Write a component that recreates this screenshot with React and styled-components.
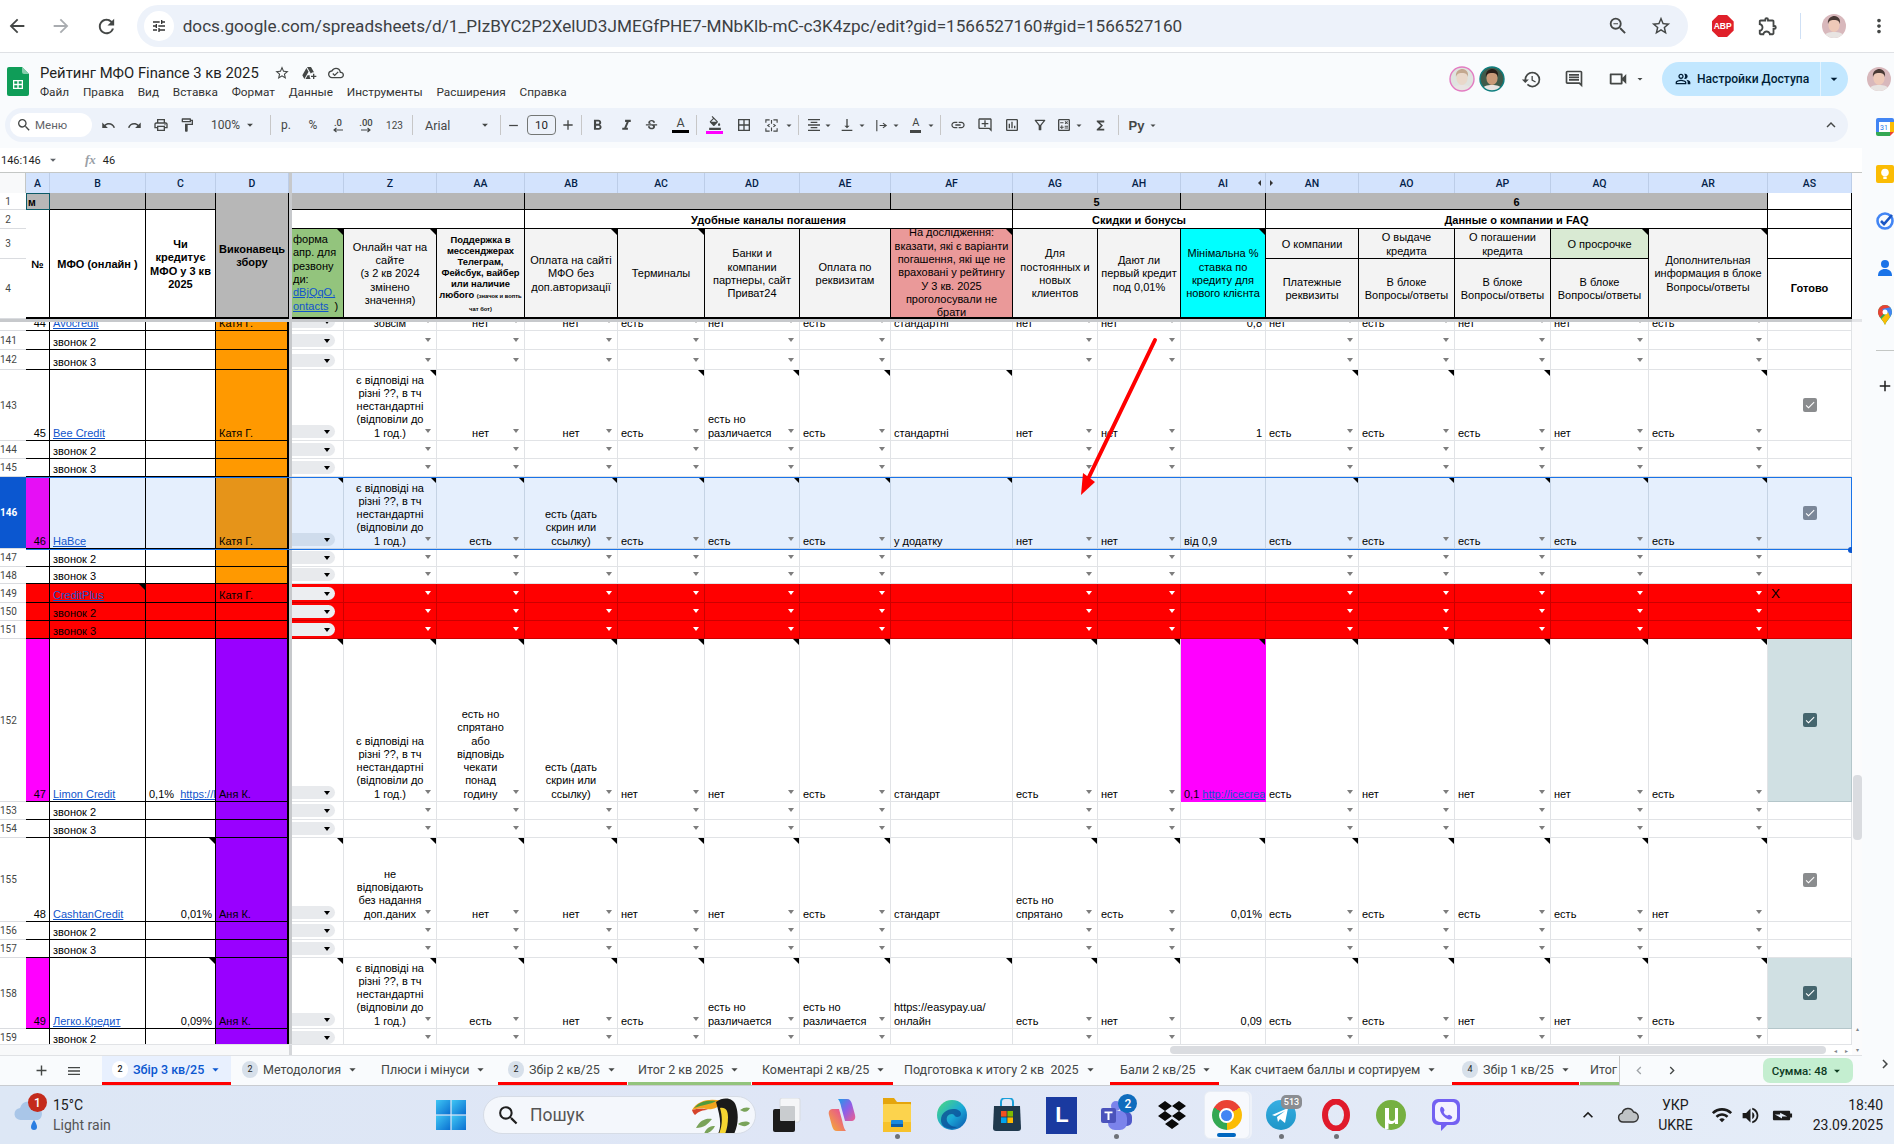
import React from 'react';
import styled, { createGlobalStyle, css } from 'styled-components';
import {
  MdArrowBack, MdArrowForward, MdRefresh, MdStarBorder, MdZoomOut, MdMoreVert, MdUndo, MdRedo, MdOutlinePrint,
  MdOutlineFormatPaint, MdFormatBold, MdFormatItalic, MdStrikethroughS, MdFormatColorFill, MdBorderAll, MdVerticalAlignBottom,
  MdInsertLink, MdOutlineAddComment, MdOutlineInsertChart, MdOutlineFilterAlt, MdOutlineCalculate, MdFunctions, MdHistory,
  MdOutlineComment, MdOutlineVideocam, MdOutlinePeopleAlt, MdExpandLess, MdAdd, MdRemove, MdMenu, MdSearch, MdChevronLeft,
  MdChevronRight, MdArrowDropDown, MdCheck, MdTune, MdOutlineExtension, MdOutlineAddToDrive, MdOutlineCloudDone, MdFormatAlignCenter,
  MdKeyboardArrowUp, MdWifi, MdVolumeUp, MdBatteryChargingFull
} from 'react-icons/md';

const SHEET = "'Liberation Sans', Arial, sans-serif";
const UI = "Roboto, 'Noto Sans', sans-serif";
const ORANGE = '#ff9900', VIOLET = '#9900ff', MAGENTA = '#ff00ff', RED = '#ff0000', TEAL = '#d0e0e3';
const widths = [26, 24, 96, 70, 73, 3, 52, 93, 88, 93, 87, 95, 91, 122, 85, 83, 85, 93, 96, 96, 98, 119, 84];
const GT = widths.map(w => `${w}px`).join(' ');

const Global = createGlobalStyle`
  html, body { margin: 0; padding: 0; overflow: hidden; background: #fff; }
  * { box-sizing: border-box; }
`;

const Page = styled.div`
  position: relative; width: 1894px; height: 1144px; overflow: hidden;
  display: flex; flex-direction: column; font-family: ${UI}; color: #1f1f1f; background: #f9fbfd;
`;
const Slot = styled.div`
  flex: none; width: ${p => p.$w}px; margin-left: ${p => p.$ml || 0}px; height: 100%;
  display: flex; align-items: center; justify-content: center; color: ${p => p.$color || '#444746'};
  font-size: ${p => p.$fs || 12}px; gap: ${p => p.$gap || 0}px; white-space: nowrap;
`;
function Seq({ start, items }) {
  let x = start;
  return items.map((it, i) => {
    const ml = it.c - it.w / 2 - x;
    x = it.c + it.w / 2;
    return <Slot key={i} $w={it.w} $ml={ml} $color={it.color} $fs={it.fs} $gap={it.gap}>{it.n}</Slot>;
  });
}

/* ---------- browser chrome ---------- */
const Chrome = styled.header`
  flex: none; height: 53px; display: flex; align-items: center; background: #fff; border-bottom: 1.5px solid #dfe1e5;
`;
const UrlBar = styled.div`
  flex: none; width: 1551px; height: 42px; margin-left: 18px; border-radius: 21px; background: #edf2fa;
  display: flex; align-items: center; position: relative;
`;
const SiteChip = styled.div`
  flex: none; width: 30px; height: 30px; margin-left: 7px; border-radius: 50%; background: #fff;
  display: flex; align-items: center; justify-content: center; color: #333;
`;
const UrlText = styled.div`
  margin-left: 9px; font: 400 17.15px ${UI}; color: #3c4043; white-space: nowrap;
`;
const UrlTools = styled.div`
  margin-left: auto; margin-right: 16px; display: flex; gap: 21px; color: #444746; align-items: center;
`;
const AbpBadge = styled.div`
  width: 22px; height: 22px; background: #e0202a; color: #fff; font: 700 8.5px ${SHEET}; display: flex; align-items: center; justify-content: center;
  clip-path: polygon(30% 0, 70% 0, 100% 30%, 100% 70%, 70% 100%, 30% 100%, 0 70%, 0 30%);
`;
const ThinSep = styled.div`width: 1px; height: 26px; background: #cfe0f5;`;

function Face({ size = 26, ring, bg = '#d9c2c4', hair = '#4a3a36', skin = '#eec9b8', id }) {
  return (
    <svg width={size} height={size} viewBox="0 0 26 26">
      <defs><clipPath id={id}><circle cx="13" cy="13" r="12" /></clipPath></defs>
      <g clipPath={`url(#${id})`}>
        <rect width="26" height="26" fill={bg} />
        <path d="M2 26c1-6 6-7 11-7s10 1 11 7z" fill="#e8e4e2" />
        <ellipse cx="13" cy="12" rx="5.6" ry="7" fill={skin} />
        <path d="M7 11c-1-6 4-8 6-8s7 1 6 8c-1-3-2-4-6-4s-5 1-6 4z" fill={hair} />
      </g>
      {ring && <circle cx="13" cy="13" r="12" fill="none" stroke={ring} strokeWidth="1.4" />}
    </svg>
  );
}

/* ---------- docs header ---------- */
const DocsHead = styled.div`flex: none; height: 53px; display: flex; align-items: flex-start;`;
const LogoBox = styled.svg`flex: none; margin: 14px 0 0 7px;`;
const SheetsLogo = () => (
  <LogoBox width="22" height="29" viewBox="0 0 22 29">
    <path d="M2 0h13l7 7v20a2 2 0 0 1-2 2H2a2 2 0 0 1-2-2V2a2 2 0 0 1 2-2z" fill="#0f9d58" />
    <path d="M15 0l7 7h-5a2 2 0 0 1-2-2z" fill="#87ceac" />
    <path d="M6 13h10v9H6zm1.3 1.3v2.5h3v-2.5zm4.4 0v2.5h3v-2.5zm-4.4 3.9v2.5h3v-2.5zm4.4 0v2.5h3v-2.5z" fill="#fff" fillRule="evenodd" />
  </LogoBox>
);
const TitleCol = styled.div`margin-left: 11px; display: flex; flex-direction: column; padding-top: 11px;`;
const TitleRow = styled.div`display: flex; align-items: center; height: 18px; color: #3c4043;`;
const DocTitle = styled.div`font: 400 14.8px ${UI}; color: #1f1f1f; white-space: nowrap; width: 219px;`;
const MenuRow = styled.nav`display: flex; gap: 13.8px; margin-top: 3px;`;
const MenuItem = styled.span`font: 400 11.8px ${UI}; color: #333; white-space: nowrap;`;
const HeadRight = styled.div`margin-left: auto; width: 445px; height: 53px; padding-top: 9px; display: flex; align-items: flex-start;`;
const RightSlots = styled.div`height: 34px; display: flex; width: 100%;`;
const ShareBtn = styled.div`
  flex: none; width: 186px; height: 34px; background: #c2e7ff; border-radius: 17px; display: flex; align-items: center; color: #001d35;
`;
const ShareMain = styled.div`
  width: 159px; height: 100%; display: flex; align-items: center; padding-left: 13px; gap: 6px;
  font: 500 12.1px ${UI}; border-right: 1px solid #e3f3ff; white-space: nowrap;
`;
const ShareDrop = styled.div`flex: 1; display: flex; justify-content: center;`;

/* ---------- toolbar ---------- */
const BodyRow = styled.div`flex: 1; min-height: 0; display: flex;`;
const MainCol = styled.main`flex: none; width: 1862px; display: flex; flex-direction: column; min-height: 0;`;
const ToolbarWrap = styled.div`flex: none; height: 42px; padding: 2px 14px 6px 5px;`;
const Toolbar = styled.div`
  height: 34px; border-radius: 17px; background: #edf2fa; display: flex; align-items: center; padding-left: 5px; position: relative;
`;
const MenuSearch = styled.div`
  flex: none; width: 82px; height: 24px; border-radius: 12px; background: #fff; display: flex; align-items: center; padding-left: 6px; gap: 3px;
  font: 400 11.5px ${UI}; color: #5f6368;
`;
const Sep = styled.div`width: 1px; height: 20px; background: #c7c7c7;`;
const ToolText = styled.span`font: ${p => p.$w || 400} ${p => p.$s || 12}px ${p => p.$f || UI}; color: #444746;`;
const FontName = styled(ToolText)`width: 100%; font-size: 12.5px;`;
const FontBox = styled.div`
  width: 29px; height: 20px; border: 1px solid #747775; border-radius: 4px; display: flex; align-items: center; justify-content: center;
  font: 400 11.5px ${UI}; color: #1f1f1f;
`;
const DecBox = styled.div`display: flex; flex-direction: column; align-items: center; font: 500 9.5px ${UI}; line-height: 9px; color: #444746;`;
const ColorIcon = styled.div`display: flex; flex-direction: column; align-items: center; gap: 1px; font: 400 ${p => p.$s || 12.5}px ${UI}; color: #444746; line-height: 12px;`;
const ColorBar = styled.div`width: ${p => p.$bw || 17}px; height: 3px; background: ${p => p.$c}; border-top: 1px solid ${p => p.$c}; border-bottom: 1px solid ${p => p.$c}; background-clip: padding-box;`;
const Drop = ({ c = '#444746', s = 14 }) => <MdArrowDropDown size={s} color={c} />;
const DecArrow = ({ right }) => (
  <svg width="12" height="6" viewBox="0 0 12 6">
    <path d={right ? 'M1 3h9M7.5 1l2.5 2-2.5 2' : 'M11 3H2M4.5 1L2 3l2.5 2'} fill="none" stroke="#444746" strokeWidth="1.1" />
  </svg>
);
const MergeIcon = () => (
  <svg width="15" height="15" viewBox="0 0 16 16" fill="none" stroke="#444746" strokeWidth="1.2">
    <path d="M2 5V2h4M10 2h4v3M2 11v3h4M10 14h4v-3M8 2v4M8 10v4M6 6.5L4 8l2 1.5M10 6.5L12 8l-2 1.5" />
  </svg>
);
const RepIcon = () => (
  <svg width="15" height="15" viewBox="0 0 16 16" fill="none" stroke="#444746" strokeWidth="1.2">
    <path d="M3 2v12M6 8h6M9.5 5.5L13 8l-3.5 2.5" />
  </svg>
);

/* ---------- formula bar ---------- */
const FormulaBar = styled.div`
  flex: none; height: 24px; background: #fff; display: flex; align-items: center; font: 400 11px ${UI}; color: #1f1f1f;
`;
const NameBox = styled.div`width: 60px; padding-left: 1px; display: flex; align-items: center; justify-content: space-between; white-space: nowrap;`;
const Fx = styled.span`margin-left: 25px; font: italic 700 13px 'Liberation Serif', serif; color: #9aa0a6;`;
const FxVal = styled.span`margin-left: 7px;`;

/* ---------- sheet ---------- */
const SheetArea = styled.section`flex: 1; min-height: 0; display: flex; border-top: 1px solid #c4c7c5;`;
const GridCol = styled.div`flex: none; width: 1852px; display: flex; flex-direction: column; min-height: 0; background: #fff;`;
const HeadGrid = styled.div`
  flex: none; display: grid; grid-template-columns: ${GT}; grid-template-rows: 20px 17px 19px 30px 60px;
  font: 400 11px ${SHEET}; color: #000;
`;
const place = css`
  grid-column: ${p => p.$c[0]} / ${p => p.$c[1]}; grid-row: ${p => p.$r[0]} / ${p => p.$r[1]};
`;
const Corner = styled.div`${place} background: #f8f9fa; border-right: 1px solid #c4c7c5;`;
const Letter = styled.div`
  ${place} background: #d3e3fd; border-right: 1px solid #bccde8; display: flex; align-items: center; justify-content: center; position: relative;
  font: 500 10.5px ${UI}; color: #041e49;
`;
const HideMark = styled.span`
  position: absolute; top: 7px; ${p => p.$side}: 4px; width: 0; height: 0; border-top: 3px solid transparent; border-bottom: 3px solid transparent;
  ${p => (p.$side === 'right' ? 'border-right: 3.5px solid #333;' : 'border-left: 3.5px solid #333;')}
`;
const RowNumCell = styled.div`
  ${place} background: #fff; border-bottom: 1px solid #dadce0; display: flex; align-items: center; font: 400 10px ${UI}; color: #444746;
`;
const RowNum = styled.span`width: 16px; text-align: center; white-space: nowrap;`;
const Freeze = styled.div`${place} background: #c7c9cc;`;
const noteCss = css`
  ${p => p.$note && css`&::after {
    content: ''; position: absolute; top: 0; right: 0; width: 0; height: 0;
    border-left: 6px solid transparent; border-top: 6px solid #000;
  }`}
`;
const HCell = styled.div`
  ${place} position: relative; background: ${p => p.$bg || '#fff'}; border-right: 1px solid #000; border-bottom: 1px solid #000;
  display: flex; align-items: center; justify-content: ${p => p.$left ? 'flex-start' : 'center'}; text-align: ${p => p.$left ? 'left' : 'center'};
  padding: ${p => p.$pt ?? 2}px ${p => p.$left ? 1 : 2}px 0; white-space: pre-line; overflow: hidden; line-height: 13.3px;
  font-weight: ${p => p.$bold ? 700 : 400}; font-size: ${p => p.$fs || 11}px;
  ${p => p.$thick && 'border-bottom-width: 2px;'}
  ${noteCss}
`;
const A1Cell = styled(HCell)`border: 1px solid #0b5a66; justify-content: flex-start; align-items: flex-end; font-size: 10.5px; font-weight: 700; padding: 0 1px;`;
const TightText = styled.div`font: 700 9.4px/11px ${SHEET}; white-space: pre;`;
const TinyText = styled.span`font-size: 5.8px;`;
const HLink = styled.span`color: #1155cc; text-decoration: underline;`;
const Band = styled.div`flex: none; height: 3px; background: #c7c9cc;`;
const Viewport = styled.div`flex: 1; min-height: 0; overflow: hidden;`;
const RowGrid = styled.div`
  display: grid; grid-template-columns: ${GT}; height: ${p => p.$h}px; position: relative;
  font: 400 11px/13.3px ${SHEET}; color: #000;
`;
const SelBox = styled.div`
  position: absolute; left: 26px; right: 0; top: 0; bottom: -1px; border: 1px solid #1a73e8; border-left: 0;
  border-top-width: 1.5px; border-bottom-width: 1.5px; pointer-events: none; z-index: 2;
`;
const SelHandle = styled.div`position: absolute; right: -3px; bottom: -4px; width: 6px; height: 6px; border-radius: 50%; background: #0b57d0;`;
const RowHead = styled.div`
  background: ${p => p.$sel ? '#0b57d0' : '#fff'}; color: ${p => p.$sel ? '#fff' : '#444746'}; font: ${p => p.$sel ? 700 : 400} 10px ${UI};
  border-bottom: 1px solid #dadce0; display: flex; align-items: center; overflow: hidden;
`;
const Cell = styled.div`
  position: relative; min-width: 0; background: ${p => p.$bg || 'transparent'};
  border-right: ${p => p.$rw || 1}px solid ${p => p.$line}; border-bottom: 1px solid ${p => p.$line};
  display: flex; align-items: flex-end; justify-content: ${p => p.$align === 'right' ? 'flex-end' : p.$align === 'center' ? 'center' : 'flex-start'};
  text-align: ${p => p.$align || 'left'}; padding: 0 3px; white-space: pre-line; overflow: hidden;
  ${noteCss}
`;
const CellText = styled.div`${p => p.$nowrap && 'white-space: pre;'}`;
const XMark = styled.div`font-size: 13.5px; line-height: 17px;`;
const CLink = styled.a`color: #1155cc; text-decoration: underline;`;
const ChipArrow = styled.span`
  position: absolute; right: 5.5px; bottom: 7.5px; width: 0; height: 0; border-left: 3.5px solid transparent; border-right: 3.5px solid transparent;
  border-top: 4px solid ${p => p.$c};
`;
const YCell = styled(Cell)`padding: 0 8px 2px 0; align-items: flex-end; justify-content: stretch;`;
const Pill = styled.div`
  flex: 1; height: 13px; border-radius: 0 7px 7px 0; background: ${p => p.$bg}; position: relative; flex-shrink: 0;
  &::after { content: ''; position: absolute; right: 5px; top: 4.5px; border-left: 3.5px solid transparent; border-right: 3.5px solid transparent; border-top: 4.5px solid #000; }
`;
const CheckWrap = styled.div`flex: 1; align-self: center; display: flex; justify-content: center;`;
const CheckBox = styled.div`
  width: 14px; height: 14px; border-radius: 2px; background: ${p => p.$bg}; color: #fff; display: flex; align-items: center; justify-content: center;
`;
const HScroll = styled.div`flex: none; height: 11px; display: flex; background: #fff; border-top: 1px solid #e1e3e6;`;
const HLeft = styled.div`width: 289px; background: #f8f9fa; flex: none;`;
const HFreeze = styled.div`width: 3px; background: #d5d7da; flex: none;`;
const HThumb = styled.div`flex: none; width: 656px; height: 8px; margin: 1px 0 0 878px; border-radius: 4px; background: #dadce0;`;
const HBtns = styled.div`margin-left: auto; width: 22px; display: flex; justify-content: space-around; align-items: center; color: #80868b; font-size: 6px;`;
const VTrack = styled.div`flex: none; width: 10px; display: flex; flex-direction: column; align-items: center; background: #fbfbfc;`;
const VBand = styled.div`flex: none; width: 100%; height: 3px; margin-top: 146px; background: #e4e5e8;`;
const VThumb = styled.div`flex: none; width: 9px; height: 65px; margin-top: 453px; border-radius: 4px; background: #dadce0;`;
const VBtns = styled.div`margin-top: auto; margin-bottom: 2px; height: 28px; display: flex; flex-direction: column; justify-content: space-between; color: #80868b; font-size: 6px; align-items: center;`;

/* ---------- sheet tabs ---------- */
const TabBar = styled.footer`
  flex: none; height: 30px; display: flex; align-items: stretch; border-top: 1px solid #e0e2e5; background: #f9fbfd; font: 400 12.5px ${UI}; color: #444746;
`;
const BarIcon = styled.div`flex: none; width: ${p => p.$w}px; margin-left: ${p => p.$ml || 0}px; display: flex; align-items: center; justify-content: center; color: #444746;`;
const Tabs = styled.div`flex: none; width: 1518px; display: flex; overflow: hidden; border-right: 1px solid #c7c7c7; height: 29px;`;
const Tab = styled.div`
  flex: none; width: ${p => p.$w - 1}px; margin-right: 1px; padding-left: 10px; display: flex; align-items: center; white-space: pre; overflow: hidden;
  background: ${p => p.$active ? '#e8f0fe' : 'transparent'}; color: ${p => p.$active ? '#0b57d0' : '#444746'}; font-weight: ${p => p.$active ? 500 : 400};
  border-bottom: 3px solid ${p => p.$line || 'transparent'};
`;
const TabBadge = styled.span`
  flex: none; width: 16px; height: 17px; border-radius: 8px; margin-right: 5px; background: ${p => p.$active ? '#fff' : '#d7e0ea'}; color: #1f1f1f;
  font-size: 9px; display: flex; align-items: center; justify-content: center;
`;
const TabArrow = styled.span`flex: none; margin-left: 4px; display: flex;`;
const SumPill = styled.div`
  flex: none; margin: 2px 9px 2px auto; width: 90px; border-radius: 7px; background: #c4eed0; color: #0d3a1f; font: 500 11.5px ${UI};
  display: flex; align-items: center; justify-content: center; gap: 3px; white-space: nowrap;
`;

/* ---------- side panel ---------- */
const Side = styled.aside`
  flex: none; width: 32px; display: flex; flex-direction: column; align-items: flex-start; padding: 12px 0 0 14px; position: relative; gap: 29px;
`;
const SideIcon = styled.div`flex: none; width: 18px; height: 18px; display: flex; align-items: center; justify-content: center;`;
const SideRule = styled.div`width: 18px; height: 1px; background: #c4c7c5; margin: -3px 0 -3px 0;`;
const SideBottom = styled.div`margin-top: auto; margin-bottom: 12px; color: #444746; display: flex;`;

/* ---------- task bar ---------- */
const TaskBar = styled.div`
  flex: none; height: 59px; display: flex; align-items: stretch; border-top: 1px solid #c9ccd1;
  background: linear-gradient(90deg, #dde7f5 0%, #dfe6f6 45%, #e5edf8 100%);
`;
const Weather = styled.div`flex: none; width: 124px; margin-left: 14px; display: flex; align-items: center; position: relative;`;
const RedBadge = styled.span`
  position: absolute; left: 14px; top: 7px; width: 19px; height: 19px; border-radius: 50%; background: #c42b1c; color: #fff;
  font: 500 12px ${UI}; display: flex; align-items: center; justify-content: center;
`;
const WeatherText = styled.div`margin-left: 9px; display: flex; flex-direction: column; gap: 3px; font: 400 14px/17px ${UI}; white-space: nowrap;`;
const WTemp = styled.span`color: #1b1b1b;`;
const WDesc = styled.span`color: #555;`;
const WinSlot = styled.div`flex: none; width: 30px; margin-left: 298px; display: flex; align-items: center;`;
const SearchBox = styled.div`
  flex: none; width: 273px; height: 38px; align-self: center; margin-left: 17px; border-radius: 19px; background: #f4f7fc; border: 1px solid #d6dce6;
  display: flex; align-items: center; padding-left: 12px; gap: 9px; font: 400 17.5px ${UI}; color: #555; position: relative; overflow: hidden;
`;
const Toucan = styled.svg`margin-left: auto; margin-right: 3px;`;
const Apps = styled.div`flex: none; display: flex; margin-left: 4px;`;
const AppSlot = styled.div`
  flex: none; width: 54.9px; display: flex; align-items: center; justify-content: center; position: relative;
  ${p => p.$dot && css`&::after { content: ''; position: absolute; left: 50%; bottom: 5px; width: 5px; height: 5px; margin-left: -2.5px; border-radius: 50%; background: #6e7278; }`}
`;
const ActiveBg = styled.div`
  width: 46px; height: 48px; border-radius: 6px; background: rgba(255,255,255,.72); border: 1px solid #e8edf5; box-shadow: 2px 0 0 #eef2f9; display: flex; align-items: center; justify-content: center; position: relative;
  &::after { content: ''; position: absolute; left: 50%; bottom: 1px; width: 19px; height: 4px; margin-left: -9.5px; border-radius: 2px; background: #0067c0; }
`;
const ChromeLogo = styled.div`
  width: 30px; height: 30px; border-radius: 50%; display: flex; align-items: center; justify-content: center;
  background: conic-gradient(from -60deg, #ea4335 0 120deg, #fbbc04 120deg 240deg, #34a853 240deg 360deg);
`;
const ChromeEye = styled.div`width: 15px; height: 15px; border-radius: 50%; background: #4285f4; border: 2.5px solid #fff;`;
const LApp = styled.div`width: 31px; height: 37px; background: #1a3aa0; color: #fff; font: 700 22px ${SHEET}; display: flex; align-items: center; justify-content: center;`;
const CountBadge = styled.span`
  position: absolute; display: flex; align-items: center; justify-content: center; color: #fff;
  ${p => p.$teams ? css`left: 29px; top: 8px; width: 19px; height: 19px; border-radius: 50%; background: #0f6cbd; font: 500 12px ${UI};`
    : css`left: 27px; top: 9px; width: 21px; height: 14px; border-radius: 5px; background: #8a8d92; font: 500 9px ${UI};`}
`;
const Tray = styled.div`flex: 1; display: flex; position: relative;`;
const TrayText = styled.div`display: flex; flex-direction: column; align-items: ${p => p.$a || 'center'}; gap: 3px; font: 400 14px/17px ${UI}; color: #1b1b1b; white-space: nowrap;`;
const BatteryIcon = styled(MdBatteryChargingFull)`transform: rotate(90deg);`;

const ArrowLayer = styled.svg`position: absolute; left: 0; top: 0; pointer-events: none; z-index: 5;`;

/* ---------- data ---------- */
const letters = ['', 'A', 'B', 'C', 'D', '', '', 'Z', 'AA', 'AB', 'AC', 'AD', 'AE', 'AF', 'AG', 'AH', 'AI', 'AN', 'AO', 'AP', 'AQ', 'AR', 'AS'];
const VK = ['Z', 'AA', 'AB', 'AC', 'AD', 'AE', 'AF', 'AG', 'AH', 'AI', 'AN', 'AO', 'AP', 'AQ', 'AR'];
const NOARROW = new Set(['AF', 'AI']);
const CENTER = new Set(['Z', 'AA', 'AB']);
const Zt = 'є відповіді на\nрізні ??, в тч\nнестандартні\n(відповіли до\n1 год.)';
const Scr = 'есть (дать\nскрин или\nссылку)';
const call = (h, n, k, dBg, extra = {}) => ({ h, n, b: `звонок ${k}`, dBg, v: [], ...extra });
const redRow = { red: true, aBg: RED, bBg: RED, cBg: RED };

const rows = [
  { h: 9, n: '', a: '44', b: 'Avocredit', link: true, d: 'Катя Г.', dBg: ORANGE, v: ['зовсім', 'нет', 'нет', 'есть', 'нет', 'есть', 'стандартні', 'нет', 'нет', '0,8', 'нет', 'есть', 'нет', 'нет', 'есть'] },
  call(19, '141', 2, ORANGE), call(20, '142', 3, ORANGE),
  { h: 71, n: '143', a: '45', b: 'Bee Credit', link: true, d: 'Катя Г.', dBg: ORANGE, notes: 'Z AC AD AE AF AN AO AP AR', chk: '#8a8c8e',
    v: [Zt, 'нет', 'нет', 'есть', 'есть но\nразличается', 'есть', 'стандартні', 'нет', 'нет', '1', 'есть', 'есть', 'есть', 'нет', 'есть'] },
  call(18, '144', 2, ORANGE), call(18, '145', 3, ORANGE),
  { h: 72, n: '146', sel: true, a: '46', aBg: '#e60ff5', b: 'НаВсе', link: true, d: 'Катя Г.', dBg: '#e69419', notes: 'Y Z AA AB AC AD AE AF AN AO AP AQ AR', chk: '#7b8799', aiLeft: true,
    v: [Zt, 'есть', Scr, 'есть', 'есть', 'есть', 'у додатку', 'нет', 'нет', 'від 0,9', 'есть', 'есть', 'есть', 'есть', 'есть'] },
  call(18, '147', 2, ORANGE), call(17, '148', 3, ORANGE),
  { h: 19, n: '149', ...redRow, b: 'CreditPlus', link: true, bNote: true, d: 'Катя Г.', dBg: RED, v: [], x: true },
  call(18, '150', 2, RED, redRow), call(18, '151', 3, RED, redRow),
  { h: 163, n: '152', a: '47', aBg: MAGENTA, b: 'Limon Credit', link: true, cMix: true, d: 'Аня К.', dBg: VIOLET, notes: 'Y Z AA AB AC AD AE AG AH AI AN AO AP AQ AR', chk: '#45666e', asBg: TEAL, aiLink: true,
    v: [Zt, 'есть но\nспрятано\nабо\nвідповідь\nчекати\nпонад\nгодину', Scr, 'нет', 'нет', 'есть', 'стандарт', 'есть', 'нет', '', 'есть', 'нет', 'нет', 'нет', 'есть'] },
  call(18, '153', 2, VIOLET), call(18, '154', 3, VIOLET),
  { h: 84, n: '155', a: '48', b: 'CashtanCredit', link: true, c: '0,01%', cNote: true, d: 'Аня К.', dBg: VIOLET, notes: 'Y Z AA AB AC AD AE AG AH AI AN AO AP AQ AR', chk: '#8a8c8e',
    v: ['не\nвідповідають\nбез надання\nдоп.даних', 'нет', 'нет', 'нет', 'нет', 'есть', 'стандарт', 'есть но\nспрятано', 'есть', '0,01%', 'есть', 'есть', 'есть', 'есть', 'нет'] },
  call(18, '156', 2, VIOLET), call(18, '157', 3, VIOLET),
  { h: 71, n: '158', a: '49', aBg: MAGENTA, b: 'Легко.Кредит', link: true, c: '0,09%', cNote: true, d: 'Аня К.', dBg: VIOLET, notes: 'Y Z AA AB AC AD AE AF AG AH AN AO AP AQ AR', chk: '#45666e', asBg: TEAL,
    v: [Zt, 'есть', 'нет', 'есть', 'есть но\nразличается', 'есть но\nразличается', 'https://easypay.ua/\nонлайн', 'есть', 'нет', '0,09', 'есть', 'есть', 'нет', 'нет', 'есть'] },
  call(18, '159', 2, VIOLET),
];

function DataRow({ r }) {
  const notes = new Set((r.notes || '').split(' '));
  const gridLine = r.red ? '#cc0000' : r.sel ? '#c5d3e4' : '#e1e3e6';
  const rowBg = r.red ? RED : r.sel ? '#e5effd' : '#fff';
  const arrow = r.red ? '#fff' : '#7d7d7d';
  const bgOf = o => o || (r.sel ? '#e5effd' : r.red ? RED : '#fff');
  return (
    <RowGrid $h={r.h}>
      <RowHead $sel={r.sel}><RowNum>{r.n}</RowNum></RowHead>
      <Cell $line="#000" $bg={r.aBg || bgOf()} $align="right"><CellText>{r.a}</CellText></Cell>
      <Cell $line="#000" $bg={r.bBg || bgOf()} $note={r.bNote}>
        <CellText $nowrap>{r.link ? <CLink>{r.b}</CLink> : r.b}</CellText>
      </Cell>
      <Cell $line="#000" $bg={r.cBg || bgOf()} $align={r.cMix ? 'left' : 'right'} $note={r.cNote}>
        {r.cMix ? <CellText $nowrap>{'0,1%  '}<CLink>https://l</CLink></CellText> : <CellText>{r.c}</CellText>}
      </Cell>
      <Cell $line="#000" $rw={2} $bg={r.dBg}><CellText $nowrap>{r.d}</CellText></Cell>
      <Freeze $c={[6, 7]} $r={[1, 2]} />
      <YCell $line={gridLine} $bg={rowBg} $note={notes.has('Y')}><Pill $bg={r.sel ? '#cfdcec' : r.red ? '#eceef1' : '#e8eaed'} /></YCell>
      {VK.map((k, i) => {
        const v = r.v[i];
        let align = CENTER.has(k) ? 'center' : 'left';
        if (k === 'AI' && !r.aiLeft && !r.aiLink) align = 'right';
        const isLink = k === 'AI' && r.aiLink;
        return (
          <Cell key={k} $line={isLink ? MAGENTA : gridLine} $bg={isLink ? MAGENTA : rowBg} $align={align} $note={notes.has(k)}>
            {isLink ? <CellText $nowrap>0,1 <CLink>http://icecrea</CLink></CellText> : <CellText>{v}</CellText>}
            {!NOARROW.has(k) && <ChipArrow $c={arrow} />}
          </Cell>
        );
      })}
      <Cell $line={r.red ? '#cc0000' : r.asBg ? '#b4c6ca' : gridLine} $bg={r.asBg || rowBg}>
        {r.x && <XMark>X</XMark>}
        {r.chk && <CheckWrap><CheckBox $bg={r.chk}><MdCheck size={12} /></CheckBox></CheckWrap>}
      </Cell>
      {r.sel && <SelBox><SelHandle /></SelBox>}
    </RowGrid>
  );
}

const GREY = '#b7b7b7', HG = '#f3f3f3';
function SheetHead() {
  const hc = (c, ce, rs, re, props, child) => <HCell key={`${c}-${rs}`} $c={[c, ce]} $r={[rs, re]} {...props}>{child}</HCell>;
  return (
    <HeadGrid>
      <Corner $c={[1, 2]} $r={[1, 2]} />
      {letters.map((l, i) => (i === 0 || i === 5 ? null : (
        <Letter key={i} $c={[i + 1, i + 2]} $r={[1, 2]}>
          {l}
          {l === 'AI' && <HideMark $side="right" />}
          {l === 'AN' && <HideMark $side="left" />}
        </Letter>
      )))}
      {[1, 2, 3, 4].map(n => <RowNumCell key={n} $c={[1, 2]} $r={[n + 1, n + 2]}><RowNum>{n}</RowNum></RowNumCell>)}
      <Freeze $c={[6, 7]} $r={[1, 6]} />
      <A1Cell $c={[2, 3]} $r={[2, 3]} $bg={GREY}>м</A1Cell>
      {hc(3, 4, 2, 3, { $bg: GREY })}
      {hc(4, 5, 2, 3, { $bg: GREY })}
      {hc(5, 6, 2, 6, { $bg: GREY, $bold: true, $thick: true }, 'Виконавець\nзбору')}
      {hc(7, 10, 2, 3, { $bg: GREY })}
      {hc(10, 14, 2, 3, { $bg: GREY })}
      {hc(14, 15, 2, 3, { $bg: GREY })}
      {hc(15, 17, 2, 3, { $bg: GREY, $bold: true, $pt: 4 }, '5')}
      {hc(17, 18, 2, 3, { $bg: GREY })}
      {hc(18, 23, 2, 3, { $bg: GREY, $bold: true, $pt: 4 }, '6')}
      {hc(23, 24, 2, 3, {})}

      {hc(2, 3, 3, 6, { $bold: true, $thick: true }, '№')}
      {hc(3, 4, 3, 6, { $bold: true, $thick: true }, 'МФО (онлайн )')}
      {hc(4, 5, 3, 6, { $bold: true, $thick: true }, 'Чи\nкредитує\nМФО у 3 кв\n2025')}
      {hc(7, 10, 3, 4, {})}
      {hc(10, 15, 3, 4, { $bold: true, $pt: 4 }, 'Удобные каналы погашения')}
      {hc(15, 18, 3, 4, { $bold: true, $pt: 4 }, 'Скидки и бонусы')}
      {hc(18, 23, 3, 4, { $bold: true, $pt: 4 }, 'Данные о компании и FAQ')}
      {hc(23, 24, 3, 4, {})}

      {hc(7, 8, 4, 6, { $bg: '#93c47d', $left: true, $note: true, $thick: true, $pt: 0 },
        <div>форма{'\n'}апр. для{'\n'}резвону{'\n'}ди:{'\n'}<HLink>dBjQqO,</HLink>{'\n'}<HLink>ontacts</HLink>&nbsp;&nbsp;)</div>)}
      {hc(8, 9, 4, 6, { $bg: HG, $note: true, $thick: true }, 'Онлайн чат на\nсайте\n(з 2 кв 2024\nзмінено\nзначення)')}
      {hc(9, 10, 4, 6, { $bg: HG, $thick: true }, <TightText>Поддержка в{'\n'}мессенджерах{'\n'}Телеграм,{'\n'}Фейсбук, вайбер{'\n'}или наличие{'\n'}любого <TinyText>(значок и вопть{'\n'}чат бот)</TinyText></TightText>)}
      {hc(10, 11, 4, 6, { $bg: HG, $note: true, $thick: true }, 'Оплата на сайті\nМФО без\nдоп.авторизації')}
      {hc(11, 12, 4, 6, { $bg: HG, $note: true, $thick: true }, 'Терминалы')}
      {hc(12, 13, 4, 6, { $bg: HG, $thick: true }, 'Банки и\nкомпании\nпартнеры, сайт\nПриват24')}
      {hc(13, 14, 4, 6, { $bg: HG, $thick: true }, 'Оплата по\nреквизитам')}
      {hc(14, 15, 4, 6, { $bg: '#ea9999', $note: true, $thick: true, $pt: 0 }, 'На дослідження:\nвказати, які є варіанти\nпогашення, які ще не\nвраховані у рейтингу\nУ 3 кв. 2025\nпроголосували не\nбрати')}
      {hc(15, 16, 4, 6, { $bg: HG, $thick: true }, 'Для\nпостоянных и\nновых\nклиентов')}
      {hc(16, 17, 4, 6, { $bg: HG, $thick: true }, 'Дают ли\nпервый кредит\nпод 0,01%')}
      {hc(17, 18, 4, 6, { $bg: '#00ffff', $note: true, $thick: true }, 'Мінімальна %\nставка по\nкредиту для\nнового клієнта')}
      {hc(18, 19, 4, 5, { $bg: HG }, 'О компании')}
      {hc(19, 20, 4, 5, { $bg: HG }, 'О выдаче\nкредита')}
      {hc(20, 21, 4, 5, { $bg: HG }, 'О погашении\nкредита')}
      {hc(21, 22, 4, 5, { $bg: '#d9ead3', $note: true }, 'О просрочке')}
      {hc(22, 23, 4, 6, { $bg: HG, $note: true, $thick: true }, 'Дополнительная\nинформация в блоке\nВопросы/ответы')}
      {hc(23, 24, 4, 5, {})}
      {hc(18, 19, 5, 6, { $bg: HG, $thick: true }, 'Платежные\nреквизиты')}
      {hc(19, 20, 5, 6, { $bg: HG, $thick: true }, 'В блоке\nВопросы/ответы')}
      {hc(20, 21, 5, 6, { $bg: HG, $thick: true }, 'В блоке\nВопросы/ответы')}
      {hc(21, 22, 5, 6, { $bg: HG, $thick: true }, 'В блоке\nВопросы/ответы')}
      {hc(23, 24, 5, 6, { $bold: true, $thick: true }, 'Готово')}
    </HeadGrid>
  );
}

const I = { size: 16 };
const toolItems = [
  { c: 108, w: 24, n: <MdUndo size={15} /> }, { c: 134.5, w: 24, n: <MdRedo size={15} /> }, { c: 161, w: 24, n: <MdOutlinePrint {...I} /> },
  { c: 187, w: 24, n: <MdOutlineFormatPaint {...I} /> },
  { c: 234, w: 50, gap: 3, n: <><ToolText>100%</ToolText><Drop /></> },
  { c: 270.5, w: 1, n: <Sep /> },
  { c: 286, w: 20, n: <ToolText>р.</ToolText> }, { c: 313, w: 20, n: <ToolText>%</ToolText> },
  { c: 338, w: 20, n: <DecBox>.0<DecArrow /></DecBox> }, { c: 366, w: 20, n: <DecBox>.00<DecArrow right /></DecBox> },
  { c: 394.5, w: 20, n: <ToolText $s={10}>123</ToolText> }, { c: 412, w: 1, n: <Sep /> },
  { c: 455, w: 60, n: <FontName>Arial</FontName> }, { c: 485, w: 14, n: <Drop /> }, { c: 500.6, w: 1, n: <Sep /> },
  { c: 514, w: 16, n: <MdRemove size={15} /> }, { c: 541.5, w: 29, n: <FontBox>10</FontBox> }, { c: 568, w: 16, n: <MdAdd size={16} /> },
  { c: 582, w: 1, n: <Sep /> }, { c: 598, w: 20, n: <MdFormatBold size={17} /> }, { c: 627, w: 20, n: <MdFormatItalic size={17} /> },
  { c: 652, w: 20, n: <MdStrikethroughS size={15} /> },
  { c: 680.6, w: 20, n: <ColorIcon>A<ColorBar $c="#000" /></ColorIcon> }, { c: 697, w: 1, n: <Sep /> },
  { c: 715, w: 20, n: <ColorIcon><MdFormatColorFill size={14} /><ColorBar $c={MAGENTA} /></ColorIcon> },
  { c: 743.6, w: 20, n: <MdBorderAll {...I} /> }, { c: 771.5, w: 18, n: <MergeIcon /> }, { c: 789, w: 12, n: <Drop s={13} /> }, { c: 799, w: 1, n: <Sep /> },
  { c: 814.5, w: 16, n: <MdFormatAlignCenter {...I} /> }, { c: 828.5, w: 12, n: <Drop s={13} /> },
  { c: 847, w: 16, n: <MdVerticalAlignBottom {...I} /> }, { c: 862, w: 12, n: <Drop s={13} /> },
  { c: 882, w: 16, n: <RepIcon /> }, { c: 896, w: 12, n: <Drop s={13} /> },
  { c: 916, w: 16, n: <ColorIcon $s={11}>A<ColorBar $c="#444746" $bw={11} /></ColorIcon> }, { c: 931, w: 12, n: <Drop s={13} /> },
  { c: 941, w: 1, n: <Sep /> },
  { c: 958, w: 20, n: <MdInsertLink {...I} /> }, { c: 985.5, w: 20, n: <MdOutlineAddComment {...I} /> }, { c: 1012, w: 20, n: <MdOutlineInsertChart {...I} /> },
  { c: 1039.7, w: 20, n: <MdOutlineFilterAlt {...I} /> }, { c: 1064, w: 18, n: <MdOutlineCalculate {...I} /> }, { c: 1079, w: 12, n: <Drop s={13} /> },
  { c: 1100.5, w: 18, n: <MdFunctions size={15} /> }, { c: 1118.6, w: 1, n: <Sep /> },
  { c: 1136.6, w: 20, n: <ToolText $w={700} $s={13} $f={SHEET}>Ру</ToolText> }, { c: 1153.5, w: 12, n: <Drop s={13} /> },
];
const tabs = [
  { w: 130, t: 'Збір 3 кв/25', badge: '2', active: true, line: RED },
  { w: 139, t: 'Методология', badge: '2' },
  { w: 127, t: 'Плюси і мінуси' },
  { w: 130, t: 'Збір 2 кв/25', badge: '2', line: RED },
  { w: 124, t: 'Итог 2 кв 2025', line: '#93c47d' },
  { w: 142, t: 'Коментарі 2 кв/25', line: RED },
  { w: 216, t: 'Подготовка к итогу 2 кв  2025' },
  { w: 110, t: 'Бали 2 кв/25', line: RED },
  { w: 232, t: 'Как считаем баллы и сортируем' },
  { w: 128, t: 'Збір 1 кв/25', badge: '4', line: RED },
  { w: 41, t: 'Итог', line: '#93c47d', noArrow: true },
];

const WinLogo = () => (
  <svg width="30" height="30" viewBox="0 0 30 30">
    <defs><linearGradient id="wg" x1="0" y1="0" x2="1" y2="1"><stop offset="0" stopColor="#3fc6f4" /><stop offset="1" stopColor="#0a6fd1" /></linearGradient></defs>
    <rect x="0" y="0" width="14.4" height="14.4" fill="url(#wg)" /><rect x="15.6" y="0" width="14.4" height="14.4" fill="url(#wg)" />
    <rect x="0" y="15.6" width="14.4" height="14.4" fill="url(#wg)" /><rect x="15.6" y="15.6" width="14.4" height="14.4" fill="url(#wg)" />
  </svg>
);
const apps = [
  { k: 'tv', n: <svg width="32" height="34" viewBox="0 0 32 34"><rect x="9" y="0" width="20" height="24" rx="2" fill="#f5f6f8" stroke="#d8dbe0" /><rect x="2" y="11" width="22" height="23" rx="2" fill="#1c1c1c" /><rect x="9" y="8" width="15" height="15" rx="1" fill="#c9cccf" /></svg> },
  { k: 'cp', n: <svg width="30" height="34" viewBox="0 0 30 34"><defs><linearGradient id="cp1" x1="0" y1="0" x2="1" y2="1"><stop offset="0" stopColor="#1b9de8" /><stop offset=".5" stopColor="#8f5de8" /><stop offset="1" stopColor="#f0608a" /></linearGradient><linearGradient id="cp2" x1="0" y1="1" x2="1" y2="0"><stop offset="0" stopColor="#f7b32b" /><stop offset="1" stopColor="#e33fa8" /></linearGradient></defs><path d="M11 1h9c3 0 4 2 5 5l3 11c1 4-1 6-4 6h-6l-3-11C14 8 13 3 11 1z" fill="url(#cp1)" /><path d="M19 33h-9c-3 0-4-2-5-5L2 17c-1-4 1-6 4-6h6l3 11c1 4 2 9 4 11z" fill="url(#cp2)" /></svg> },
  { k: 'fo', dot: true, n: <svg width="32" height="34" viewBox="0 0 32 34"><path d="M2 0h11l3 4h14v6H2z" fill="#e5a50c" /><rect x="2" y="6" width="28" height="28" rx="1" fill="#fcd34d" /><rect x="2" y="24" width="28" height="10" fill="#f7c22c" /><rect x="10" y="22" width="12" height="7" rx="1" fill="#1a8adf" /><rect x="10" y="26" width="12" height="3" fill="#0d5ea8" /></svg> },
  { k: 'ed', n: <svg width="30" height="30" viewBox="0 0 30 30"><defs><linearGradient id="ed1" x1="0" y1="0" x2="1" y2="1"><stop offset="0" stopColor="#4fdc7a" /><stop offset=".55" stopColor="#1aa8d8" /><stop offset="1" stopColor="#0b4fa8" /></linearGradient></defs><circle cx="15" cy="15" r="15" fill="url(#ed1)" /><path d="M4 20c0-7 6-11 12-11 5 0 8 2 8 5 0 2-2 3-4 3-3 0-2-3-5-3-4 0-6 3-5 7 1 3 5 6 10 6-3 2-7 2-10 1-4-1-6-4-6-8z" fill="#0a4a94" opacity=".75" /></svg> },
  { k: 'st', n: <svg width="28" height="34" viewBox="0 0 28 34"><path d="M8 8V4a4 4 0 0 1 4-4h4a4 4 0 0 1 4 4v4" fill="none" stroke="#1a9fd9" strokeWidth="2" /><path d="M1 8h26l1 22a3 3 0 0 1-3 3H3a3 3 0 0 1-3-3z" fill="#20394d" /><rect x="8" y="13" width="5.6" height="5.6" fill="#f25022" /><rect x="14.4" y="13" width="5.6" height="5.6" fill="#7fba00" /><rect x="8" y="19.4" width="5.6" height="5.6" fill="#00a4ef" /><rect x="14.4" y="19.4" width="5.6" height="5.6" fill="#ffb900" /></svg> },
  { k: 'l', n: <LApp>L</LApp> },
  { k: 'te', dot: true, n: <><svg width="32" height="30" viewBox="0 0 32 30"><circle cx="24" cy="9" r="5" fill="#7b83eb" /><rect x="15" y="12" width="16" height="14" rx="5" fill="#5059c9" /><circle cx="15" cy="6" r="5" fill="#7b83eb" /><rect x="7" y="11" width="19" height="19" rx="7" fill="#7b83eb" /><rect x="0" y="8" width="15" height="15" rx="2" fill="#4b53bc" /><path d="M3.5 11.5h8v1.8H8.5V20H6.5v-6.7h-3z" fill="#fff" /></svg><CountBadge $teams>2</CountBadge></> },
  { k: 'db', n: <svg width="30" height="30" viewBox="0 0 30 30" fill="#0a0a0a"><path d="M8 1l7 5-7 5-7-5zM22 1l7 5-7 5-7-5zM8 11l7 5-7 5-7-5zM22 11l7 5-7 5-7-5zM15 19l7 5-7 5-7-5z" /></svg> },
  { k: 'ch', active: true, n: <ActiveBg><ChromeLogo><ChromeEye /></ChromeLogo></ActiveBg> },
  { k: 'tg', dot: true, n: <><svg width="30" height="30" viewBox="0 0 30 30"><defs><linearGradient id="tg" x1="0" y1="0" x2="0" y2="1"><stop offset="0" stopColor="#37aee2" /><stop offset="1" stopColor="#1e96c8" /></linearGradient></defs><circle cx="15" cy="15" r="15" fill="url(#tg)" /><path d="M6 15l16-7-3 15-5-4-2 3-1-5 8-6-10 5z" fill="#fff" /></svg><CountBadge>513</CountBadge></> },
  { k: 'op', dot: true, n: <svg width="28" height="32" viewBox="0 0 28 32"><ellipse cx="14" cy="16" rx="11" ry="13.5" fill="none" stroke="#e01a2b" strokeWidth="6" /></svg> },
  { k: 'ut', n: <svg width="30" height="32" viewBox="0 0 30 32"><circle cx="15" cy="16" r="15" fill="#76b041" /><path d="M9 9h4v10c0 2 1 3 3 3s3-1 3-3V9h3v16h-3v-2c-1 1.5-2.5 2-4 2-1 0-2 0-2.500-1v6H9z" fill="#fff" /></svg> },
  { k: 'vb', n: <svg width="28" height="32" viewBox="0 0 28 32"><path d="M6 0h16a6 6 0 0 1 6 6v14a6 6 0 0 1-6 6h-7l-6 6v-6H6a6 6 0 0 1-6-6V6a6 6 0 0 1 6-6z" fill="#7360f2" /><rect x="3" y="3" width="22" height="20" rx="5" fill="#f4f1ff" /><path d="M9 8c2-1 3 2 3.500 3 .3.800-1 1.500-.8 2.200.7 1.800 1.800 2.800 3.300 3.300.8.200 1.400-1 2.200-.8 1 .4 3.500 1.700 3 3-.7 1.800-2.600 2-4 1.500-3.500-1.300-6.300-4-7.700-7.500-.6-1.600-.5-3.800.500-4.700z" fill="#7360f2" /></svg> },
];

export default function App() {
  return (
    <Page>
      <Global />
      <Chrome>
        <Slot $w={24} $ml={5}><MdArrowBack size={22} color="#444746" /></Slot>
        <Slot $w={24} $ml={19.6}><MdArrowForward size={22} color="#a9acb0" /></Slot>
        <Slot $w={24} $ml={22.1}><MdRefresh size={23} color="#444746" /></Slot>
        <UrlBar>
          <SiteChip><MdTune size={16} /></SiteChip>
          <UrlText>docs.google.com/spreadsheets/d/1_PIzBYC2P2XelUD3JMEGfPHE7-MNbKlb-mC-c3K4zpc/edit?gid=1566527160#gid=1566527160</UrlText>
          <UrlTools><MdZoomOut size={22} /><MdStarBorder size={22} /></UrlTools>
        </UrlBar>
        <Seq start={1690} items={[
          { c: 1725, w: 24, n: <AbpBadge>ABP</AbpBadge> },
          { c: 1770, w: 24, n: <MdOutlineExtension size={22} /> },
          { c: 1802.5, w: 1, n: <ThinSep /> },
          { c: 1836, w: 26, n: <Face id="fa" bg="#d8b8bc" /> },
          { c: 1881, w: 24, n: <MdMoreVert size={22} /> },
        ]} />
      </Chrome>

      <DocsHead>
        <SheetsLogo />
        <TitleCol>
          <TitleRow>
            <DocTitle>Рейтинг МФО Finance 3 кв 2025</DocTitle>
            <Slot $w={16} $ml={15}><MdStarBorder size={16} /></Slot>
            <Slot $w={16} $ml={11}><MdOutlineAddToDrive size={16} /></Slot>
            <Slot $w={16} $ml={11}><MdOutlineCloudDone size={16} /></Slot>
          </TitleRow>
          <MenuRow>
            {['Файл', 'Правка', 'Вид', 'Вставка', 'Формат', 'Данные', 'Инструменты', 'Расширения', 'Справка'].map(m => <MenuItem key={m}>{m}</MenuItem>)}
          </MenuRow>
        </TitleCol>
        <HeadRight>
          <RightSlots>
            <Seq start={1449} items={[
              { c: 1462, w: 26, n: <Face id="fb" ring="#e37cc2" bg="#dfe3df" hair="#c3a88f" skin="#e9d8ca" /> },
              { c: 1492, w: 26, n: <Face id="fc" ring="#0f7f80" bg="#3f5a4a" hair="#2a1e18" skin="#c99a78" /> },
              { c: 1531.6, w: 24, n: <MdHistory size={21} /> },
              { c: 1574, w: 24, n: <MdOutlineComment size={20} /> },
              { c: 1618, w: 24, n: <MdOutlineVideocam size={22} /> },
              { c: 1640, w: 12, n: <Drop s={14} /> },
              { c: 1755, w: 186, n: <ShareBtn>
                <ShareMain><MdOutlinePeopleAlt size={16} />Настройки Доступа</ShareMain>
                <ShareDrop><Drop c="#001d35" s={16} /></ShareDrop>
              </ShareBtn> },
              { c: 1879, w: 26, n: <Face id="fd" bg="#d8b8bc" /> },
            ]} />
          </RightSlots>
        </HeadRight>
      </DocsHead>

      <BodyRow>
        <MainCol>
          <ToolbarWrap>
            <Toolbar>
              <MenuSearch><MdSearch size={16} color="#444746" />Меню</MenuSearch>
              <Seq start={92} items={toolItems} />
              <Slot $w={20} $ml={661.5}><MdExpandLess size={18} /></Slot>
            </Toolbar>
          </ToolbarWrap>
          <FormulaBar>
            <NameBox>146:146<Drop c="#5f6368" s={14} /></NameBox>
            <Fx>fx</Fx>
            <FxVal>46</FxVal>
          </FormulaBar>
          <SheetArea>
            <GridCol>
              <SheetHead />
              <Band />
              <Viewport>{rows.map((r, i) => <DataRow key={i} r={r} />)}</Viewport>
              <HScroll>
                <HLeft /><HFreeze /><HThumb />
                <HBtns><span>◂</span><span>▸</span></HBtns>
              </HScroll>
            </GridCol>
            <VTrack>
              <VBand /><VThumb />
              <VBtns><span>▴</span><span>▾</span></VBtns>
            </VTrack>
          </SheetArea>
          <TabBar>
            <BarIcon $w={18} $ml={32}><MdAdd size={17} /></BarIcon>
            <BarIcon $w={18} $ml={15}><MdMenu size={16} /></BarIcon>
            <BarIcon $w={0} $ml={19} />
            <Tabs>
              {tabs.map(t => (
                <Tab key={t.t} $w={t.w} $active={t.active} $line={t.line}>
                  {t.badge && <TabBadge $active={t.active}>{t.badge}</TabBadge>}
                  {t.t}
                  {!t.noArrow && <TabArrow><Drop c={t.active ? '#0b57d0' : '#444746'} s={15} /></TabArrow>}
                </Tab>
              ))}
            </Tabs>
            <BarIcon $w={16} $ml={11}><MdChevronLeft size={17} color="#a0a4a8" /></BarIcon>
            <BarIcon $w={16} $ml={17}><MdChevronRight size={17} /></BarIcon>
            <SumPill>Сумма: 48<Drop c="#0d3a1f" s={14} /></SumPill>
          </TabBar>
        </MainCol>
        <Side>
          <SideIcon>
            <svg width="18" height="18" viewBox="0 0 18 18"><rect width="18" height="18" rx="2" fill="#fff" /><path d="M0 2a2 2 0 0 1 2-2h14a2 2 0 0 1 2 2v2H0z" fill="#4285f4" /><path d="M0 14h14v4H2a2 2 0 0 1-2-2z" fill="#34a853" /><path d="M14 14h4l-4 4z" fill="#ea4335" /><rect x="14" y="4" width="4" height="10" fill="#fbbc04" /><rect x="0" y="4" width="3" height="10" fill="#4285f4" /><text x="8" y="12" fontSize="7" fill="#1a73e8" fontFamily="Roboto" textAnchor="middle">31</text></svg>
          </SideIcon>
          <SideIcon>
            <svg width="18" height="18" viewBox="0 0 18 18"><rect width="18" height="18" rx="2" fill="#fbbc04" /><circle cx="9" cy="7.500" r="3.800" fill="#fff" /><rect x="7.300" y="11.500" width="3.400" height="2.500" fill="#fff" /></svg>
          </SideIcon>
          <SideIcon>
            <svg width="18" height="18" viewBox="0 0 18 18"><circle cx="9" cy="9" r="7.500" fill="none" stroke="#4285f4" strokeWidth="2.600" /><path d="M5 9l3 3 8-9" fill="none" stroke="#1a56c4" strokeWidth="2.600" /></svg>
          </SideIcon>
          <SideIcon>
            <svg width="18" height="18" viewBox="0 0 18 18" fill="#1a73e8"><circle cx="9" cy="5" r="4" /><path d="M2 17c0-5 3-7 7-7s7 2 7 7z" /></svg>
          </SideIcon>
          <SideIcon>
            <svg width="18" height="20" viewBox="0 0 18 20"><path d="M9 0a7 7 0 0 1 7 7c0 5-6 9-7 13-1-4-7-8-7-13a7 7 0 0 1 7-7z" fill="#34a853" /><path d="M9 0a7 7 0 0 1 5.200 2.300L4 12.500C2.800 10.800 2 9 2 7a7 7 0 0 1 7-7z" fill="#ea4335" /><path d="M14.200 2.300A7 7 0 0 1 16 7c0 1.800-.8 3.400-2 5L6 4z" fill="#4285f4" /><path d="M14 12c-2 2.500-4 5-5 8-.5-2-2.200-4-3.800-6L12 7z" fill="#fbbc04" /><circle cx="9" cy="7" r="2.500" fill="#fff" /></svg>
          </SideIcon>
          <SideRule />
          <SideIcon><MdAdd size={22} color="#1f1f1f" /></SideIcon>
          <SideBottom><MdChevronRight size={18} /></SideBottom>
        </Side>
      </BodyRow>

      <TaskBar>
        <Weather>
          <svg width="30" height="38" viewBox="0 0 30 38"><path d="M7 24a6 6 0 0 1-1-12 9 9 0 0 1 17-1 7 7 0 0 1 1 13z" fill="#a9c6e8" /><path d="M20 24c2 3 3 5 3 7a3 3 0 0 1-6 0c0-2 1-4 3-7z" fill="#2a7de1" /></svg>
          <RedBadge>1</RedBadge>
          <WeatherText><WTemp>15°C</WTemp><WDesc>Light rain</WDesc></WeatherText>
        </Weather>
        <WinSlot><WinLogo /></WinSlot>
        <SearchBox>
          <MdSearch size={25} color="#1f1f1f" />
          Пошук
          <Toucan width="62" height="38" viewBox="0 0 62 38">
            <path d="M6 32c4-8 10-10 16-9-4 5-8 9-16 9zM14 38c2-6 6-8 11-8-2 4-5 7-11 8zM50 14c4-3 7-3 10-2-2 4-5 5-10 2zM48 28c5-3 9-3 12-1-3 4-7 4-12 1z" fill="#7aa35a" />
            <path d="M2 14C8 4 20 2 32 5c-2 7-10 9-16 8-6-1-10 0-14 1z" fill="#f2a31f" />
            <path d="M4 12c6-7 14-8 22-7-4 3-14 4-22 7z" fill="#4f9a3c" />
            <path d="M2 14c1 3 2 4 3 5 4-4 8-5 13-5-6-2-11-1-16 0z" fill="#d6432b" />
            <path d="M26 6c8-6 18-4 20 4 3 9 2 20-2 28H28c4-9 2-18-2-32z" fill="#1a1a1a" />
            <path d="M30 12c6-1 8 3 8 9 0 7-1 12-3 17h-6c3-8 4-16 1-26z" fill="#f4d431" />
          </Toucan>
        </SearchBox>
        <Apps>
          {apps.map(a => <AppSlot key={a.k} $dot={a.dot}>{a.n}</AppSlot>)}
        </Apps>
        <Tray>
          <Seq start={1473.7} items={[
            { c: 1588, w: 20, color: '#1b1b1b', n: <MdKeyboardArrowUp size={22} /> },
            { c: 1628.5, w: 24, n: <svg width="22" height="20" viewBox="0 0 22 20"><path d="M6 17a4.500 4.500 0 0 1-.8-8.900A6 6 0 0 1 16.500 7 5 5 0 0 1 16 17z" fill="#bfc3c6" stroke="#333" strokeWidth="1.400" /></svg> },
            { c: 1675.5, w: 44, n: <TrayText><span>УКР</span><span>UKRE</span></TrayText> },
            { c: 1722, w: 22, color: '#1b1b1b', n: <MdWifi size={22} /> },
            { c: 1751, w: 22, color: '#1b1b1b', n: <MdVolumeUp size={21} /> },
            { c: 1782.6, w: 24, color: '#1b1b1b', n: <BatteryIcon size={23} /> },
            { c: 1848, w: 72, n: <TrayText $a="flex-end"><span>18:40</span><span>23.09.2025</span></TrayText> },
          ]} />
        </Tray>
      </TaskBar>

      <ArrowLayer width="1894" height="1144" viewBox="0 0 1894 1144">
        <path d="M1155 340L1088 479" stroke="#ff0000" strokeWidth="4" strokeLinecap="round" fill="none" />
        <path d="M1081 495L1083 473L1095 482Z" fill="#ff0000" />
      </ArrowLayer>
    </Page>
  );
}
